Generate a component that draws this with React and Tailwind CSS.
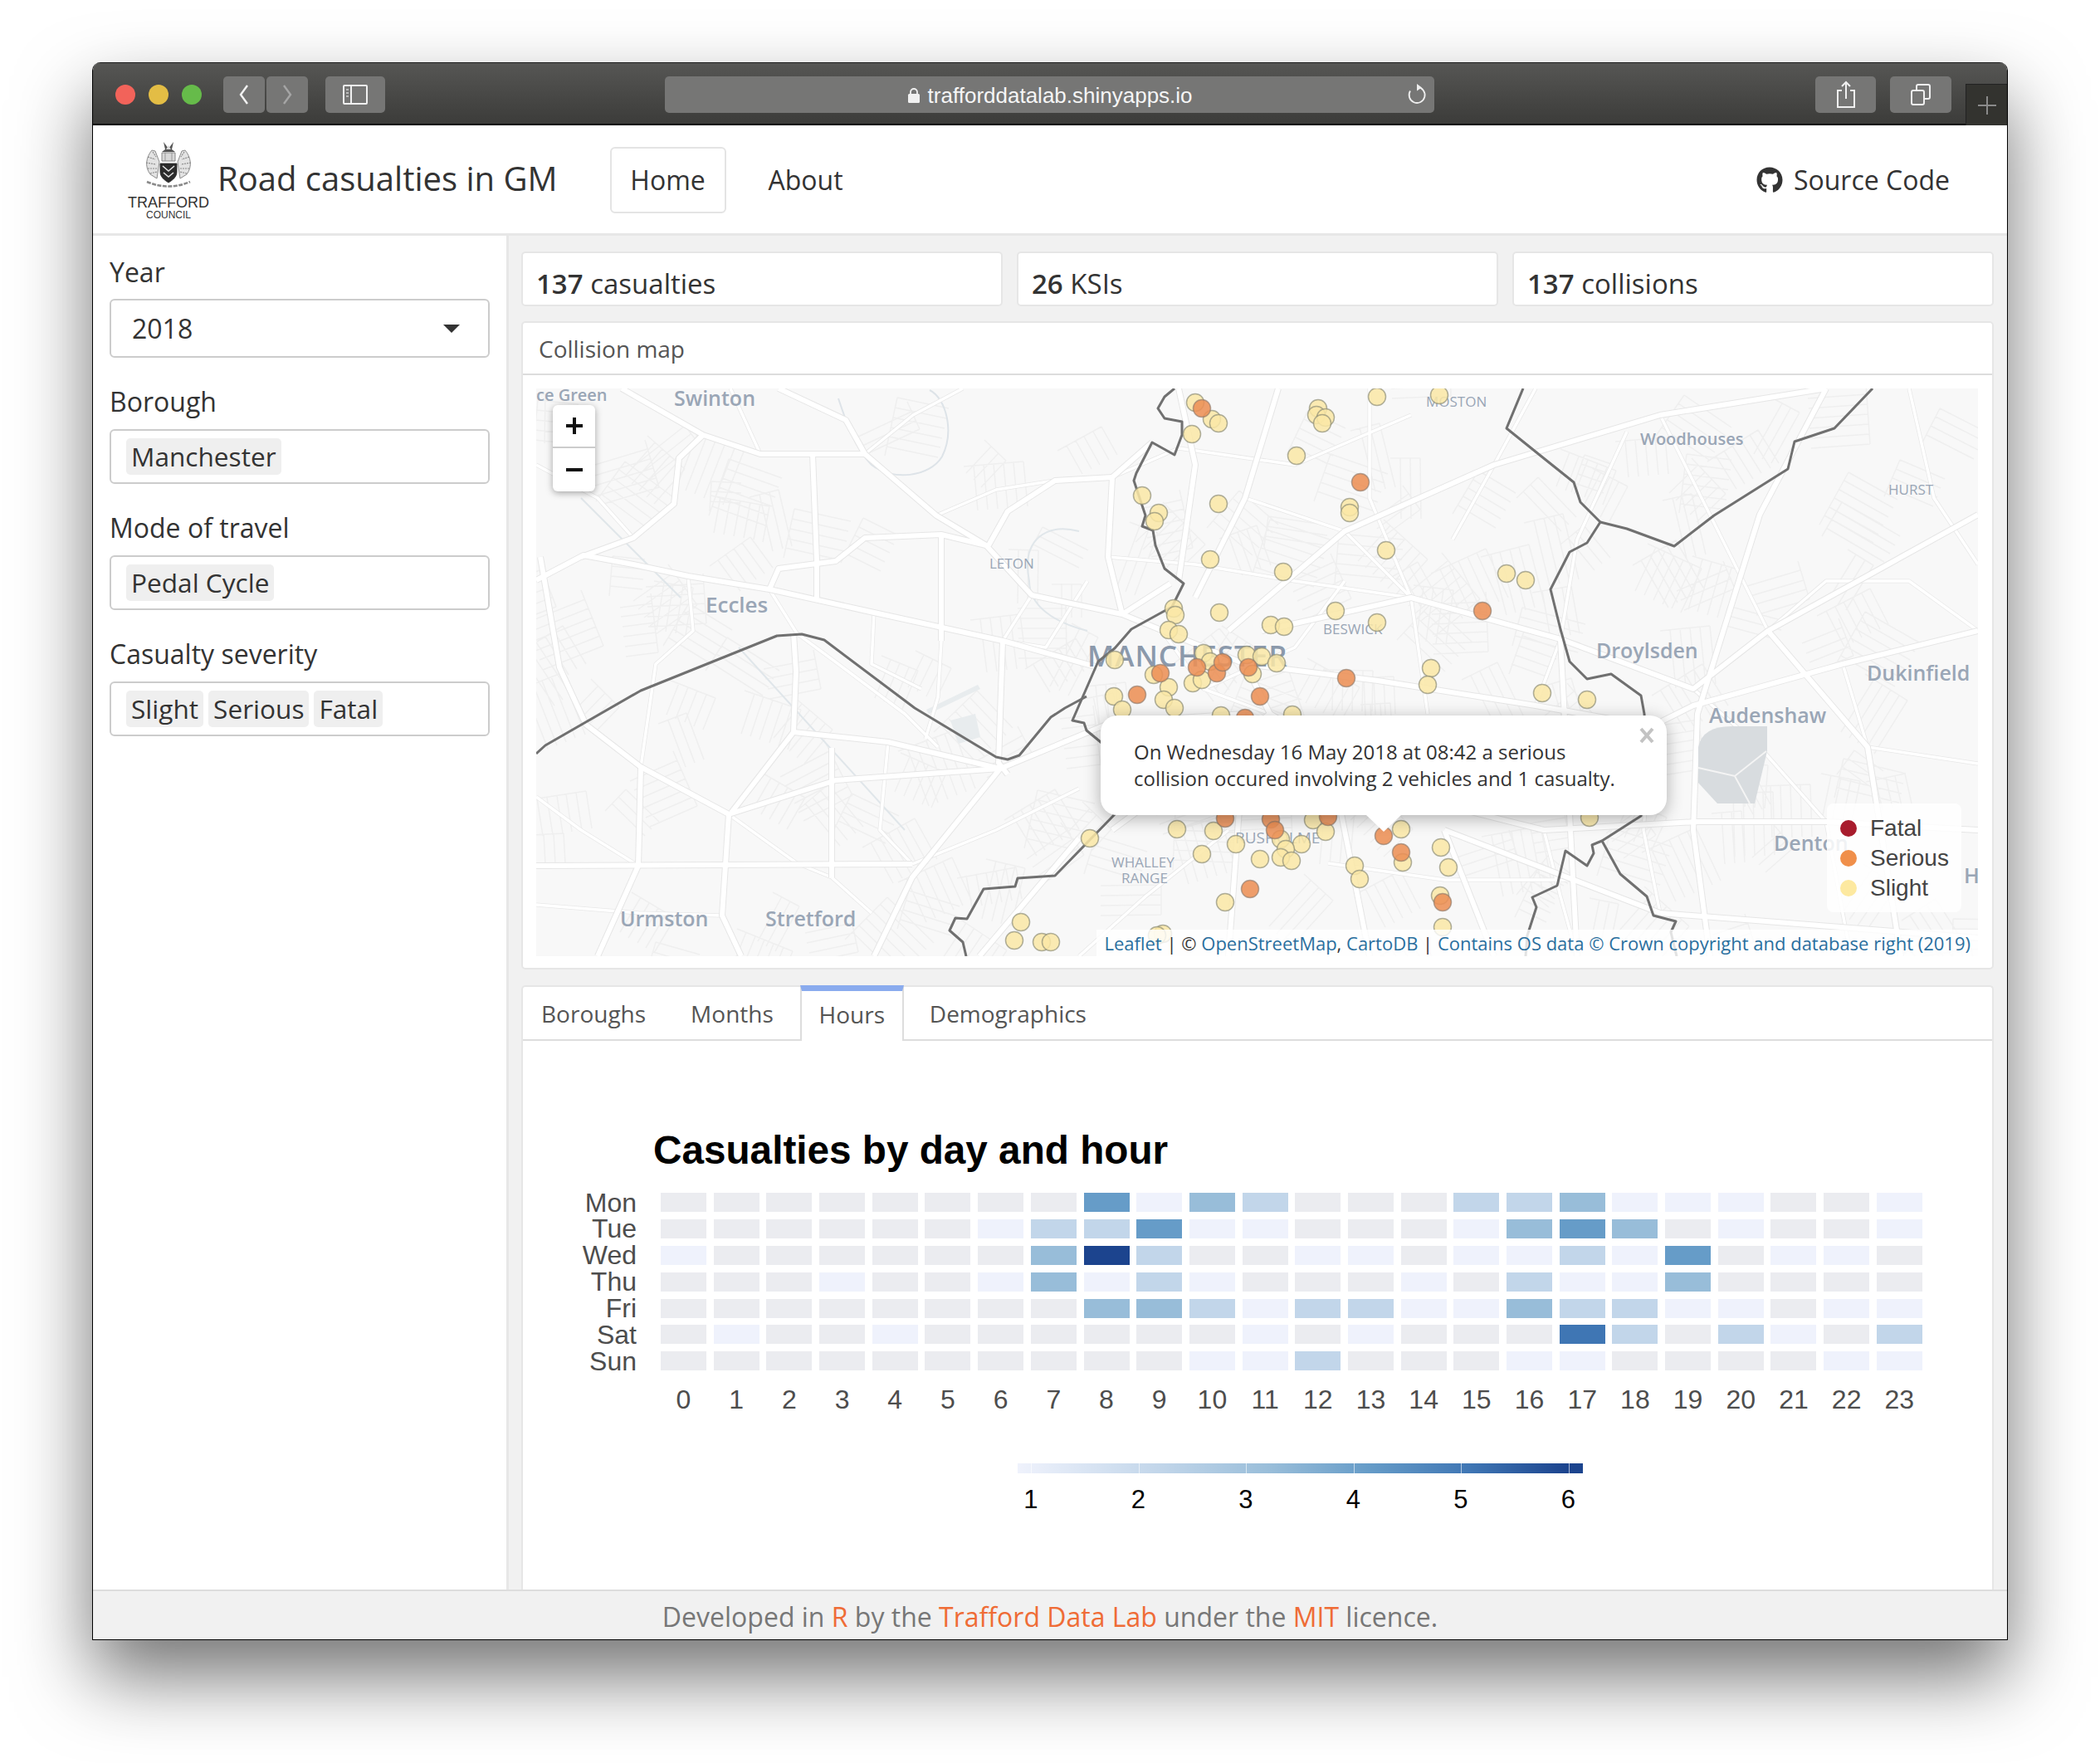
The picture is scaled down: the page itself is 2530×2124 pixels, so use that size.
import React from "react";
import { FaGithub } from "react-icons/fa";

const HEAT = [
  [0,0,0,0,0,0,0,0,4,1,3,2,0,0,0,2,2,3,1,1,1,0,0,1],
  [0,0,0,0,0,0,1,2,2,4,1,1,0,0,0,1,3,4,3,0,1,0,0,1],
  [1,0,0,0,0,0,0,3,6,2,0,0,1,1,0,1,1,2,1,4,0,1,1,0],
  [0,0,0,1,0,0,1,3,1,2,1,0,0,0,1,0,2,1,1,3,0,0,0,0],
  [0,0,0,0,0,0,0,0,3,3,2,1,2,2,1,1,3,2,2,1,1,0,1,1],
  [0,1,0,0,1,0,0,0,0,0,0,1,0,1,0,0,0,5,2,0,2,1,0,2],
  [0,0,0,0,0,0,0,0,0,0,1,1,2,0,0,0,1,1,0,0,0,0,1,1],
];
const HEAT_CLASS = ["bg-[#ebecf0]", "bg-[#eff2fc]", "bg-[#c2d6ea]", "bg-[#98bdd9]", "bg-[#669cc8]", "bg-[#3f76b4]", "bg-[#1c448e]"];
const DAYS = ["Mon", "Tue", "Wed", "Thu", "Fri", "Sat", "Sun"];

const SLIGHT = [
  [1440,485],[1460,505],[1468,510],[1436,523],[1376,597],[1396,618],[1391,628],[1468,607],[1458,674],[1414,733],[1416,741],[1408,759],[1420,764],[1469,738],
  [1531,753],[1547,755],[1588,492],[1586,500],[1597,503],[1593,510],[1659,478],[1734,476],[1562,549],[1626,611],[1626,618],[1670,663],[1546,689],[1815,691],[1838,699],[1609,736],[1659,750],
  [1343,795],[1390,813],[1408,828],[1437,823],[1448,819],[1450,787],[1458,797],[1502,789],[1520,791],[1538,799],[1509,812],[1342,839],[1352,855],[1402,843],[1415,853],[1471,862],[1557,861],
  [1724,805],[1720,825],[1858,835],[1912,843],[1418,999],[1462,1001],[1489,1017],[1582,988],[1597,1002],[1688,999],[1543,1011],[1568,1017],[1549,1023],[1543,1033],[1556,1037],[1518,1035],
  [1448,1029],[1313,1010],[1736,1021],[1745,1045],[1632,1043],[1638,1059],[1690,1039],[1735,1079],[1738,1117],[1476,1087],[1915,985],[1401,1125],[1394,1127],[1230,1111],[1222,1133],[1255,1135],[1266,1135],
];
const SERIOUS = [
  [1448,492],[1639,581],[1786,736],[1398,811],[1442,804],[1466,811],[1473,798],[1504,804],[1622,817],[1370,837],[1518,839],[1500,865],[1476,986],[1531,987],[1536,1000],[1600,984],[1667,1007],[1688,1027],[1738,1087],[1506,1071],
];

const ROADS = [
  [[646,699],[703,669],[763,680],[829,694],[927,710],[1053,738],[1208,772],[1323,804]],
  [[651,671],[674,804],[706,873],[772,924],[878,981],[870,1103],[893,1152]],
  [[749,468],[847,524],[916,547],[1042,547],[1128,621],[1188,657],[1243,717],[1352,740],[1410,703]],
  [[1042,547],[1019,506],[938,468]],
  [[847,524],[818,552],[812,607],[763,648],[700,671]],
  [[979,547],[984,676],[984,720]],
  [[927,710],[938,685],[1007,676],[1042,648],[1134,644],[1188,657]],
  [[1134,644],[1134,772]],
  [[1208,772],[1203,919],[1214,933]],
  [[956,882],[881,979]],
  [[956,882],[1070,894],[1205,926],[1340,870],[1500,860]],
  [[956,763],[959,809],[956,882]],
  [[1205,926],[1099,1057],[1053,1152]],
  [[878,981],[1007,940],[1205,926]],
  [[1002,901],[1002,1057]],
  [[646,1043],[1099,1041]],
  [[772,924],[769,1043],[720,1152]],
  [[1340,575],[1271,579],[1214,616],[1191,657]],
  [[1340,575],[1335,671],[1352,740]],
  [[1388,533],[1340,575]],
  [[1500,800],[1660,820],[1850,850],[1990,875],[2040,850],[2220,800],[2383,760]],
  [[1530,860],[1700,960],[1860,1000],[2045,990],[2200,990],[2383,1000]],
  [[1520,760],[1700,720],[1880,770],[2040,830],[2130,760],[2383,620]],
  [[1480,760],[1620,640],[1800,560],[2000,500],[2200,468]],
  [[1440,720],[1500,600],[1540,468]],
  [[1420,700],[1440,560],[1420,468]],
  [[2200,468],[2120,620],[2045,860],[2040,1000],[2060,1152]],
  [[1500,880],[1480,1152]],
  [[1600,900],[1650,1152]],
  [[1740,1000],[1800,1152]],
  [[1300,1010],[1180,1152]],
  [[1740,1000],[2000,1100],[2383,1130]],
  [[1352,740],[1500,800],[1530,860],[1340,1000]],
  [[1880,770],[1900,1152]],
  [[2130,760],[2250,900],[2290,1152]],
];

const MINOR_ROADS = [
  [[646,560],[720,600],[763,648]],
  [[1042,547],[1100,500],[1160,468]],
  [[916,547],[880,468]],
  [[1128,621],[1200,590],[1270,579]],
  [[829,694],[835,760],[790,800],[772,924]],
  [[927,710],[960,763],[1010,800],[1090,860],[1130,900]],
  [[1053,738],[1050,800],[1110,830]],
  [[1134,772],[1130,840],[1115,890]],
  [[646,960],[700,1000],[769,1043]],
  [[878,981],[960,1040],[1002,1057]],
  [[1002,1057],[1050,1100]],
  [[1070,894],[1060,1000],[1099,1041]],
  [[870,1103],[770,1100],[646,1090]],
  [[1099,1041],[1200,1000],[1300,950]],
  [[1208,772],[1260,780],[1310,700]],
  [[1243,717],[1208,772]],
  [[1340,575],[1420,540],[1560,560],[1700,500]],
  [[1335,671],[1440,680],[1560,700],[1700,720]],
  [[1500,600],[1620,640],[1700,720],[1720,860]],
  [[1850,850],[1880,770],[1900,650],[1960,520]],
  [[2040,830],[2120,900],[2200,990]],
  [[2220,800],[2250,900],[2383,920]],
  [[2130,760],[2200,700],[2300,700],[2383,760]],
  [[2000,500],[2060,620],[2130,760]],
  [[1990,875],[1980,1000],[2000,1100]],
  [[2200,990],[2220,1100],[2230,1152]],
  [[1860,1000],[1880,1080],[1900,1152]],
  [[1480,1000],[1380,1080],[1300,1152]],
  [[1600,1040],[1740,1060],[1900,1060]],
  [[1480,920],[1600,900],[1700,960]],
  [[1750,650],[1800,560],[1850,468]],
  [[1700,720],[1650,600],[1650,468]],
  [[1400,760],[1450,830],[1530,860]],
  [[1450,830],[1560,780],[1620,700]],
  [[2300,468],[2330,600],[2383,680]],
];

const WEST_LINE = [[646,908],[657,898],[772,832],[936,766],[966,764],[993,771],[1102,853],[1200,912],[1214,915],[1228,910],[1266,864],[1283,853],[1309,839]];
const CITY_LINE = [[1415,468],[1403,478],[1395,492],[1403,504],[1424,508],[1424,524],[1415,548],[1388,533],[1369,570],[1366,579],[1380,621],[1376,634],[1389,639],[1392,657],[1403,685],[1426,703],[1412,731],[1363,758],[1343,781],[1323,797],[1292,868],[1306,871],[1309,880],[1326,894],[1370,940],[1343,981],[1271,1055],[1226,1058],[1223,1068],[1185,1071],[1165,1107],[1151,1106],[1144,1121],[1160,1135],[1164,1152]];
const EAST_LINE = [[1835,468],[1815,516],[1856,549],[1896,581],[1904,605],[1928,629],[1912,654],[1891,665],[1868,710],[1880,758],[1891,797],[1912,818],[1941,812],[1977,838],[1981,860],[1985,920],[1977,983],[1930,1013],[1952,1053],[1984,1080],[1992,1103],[2019,1110],[2013,1123],[2020,1152]];
const NORTH_LINE = [[2256,468],[2210,516],[2162,532],[2154,565],[2065,621],[2017,658],[1960,637],[1928,629]];
const SOUTH_LINE = [[1930,1013],[1918,1018],[1920,1028],[1912,1043],[1886,1025],[1876,1067],[1846,1081],[1851,1093],[1840,1127],[1838,1152]];

const toPoints = (pts) => pts.map((p) => p.join(",")).join(" ");

// patches of parallel side streets for the base map, fixed seed
const makeStreets = () => {
  let seed = 11;
  const rnd = () => {
    seed = (seed * 16807) % 2147483647;
    return seed / 2147483647;
  };
  const out = [];
  for (let i = 0; i < 190; i++) {
    const cx = 646 + rnd() * 1737;
    const cy = 468 + rnd() * 684;
    const a = rnd() * 3.14;
    const dx = Math.cos(a);
    const dy = Math.sin(a);
    const rows = 3 + Math.floor(rnd() * 4);
    const len = 36 + rnd() * 46;
    for (let j = 0; j < rows; j++) {
      const ox = cx - dy * j * 12;
      const oy = cy + dx * j * 12;
      out.push(`M${ox.toFixed(0)} ${oy.toFixed(0)}l${(dx * len).toFixed(0)} ${(dy * len).toFixed(0)}`);
    }
    // cross street over the patch
    out.push(`M${cx.toFixed(0)} ${cy.toFixed(0)}l${(-dy * rows * 12).toFixed(0)} ${(dx * rows * 12).toFixed(0)}`);
  }
  return out.join("");
};
const STREETS = makeStreets();

const LABELS = [
  ["ce Green", 646, 483, 20, 600],
  ["Swinton", 812, 489, 25, 600],
  ["Eccles", 850, 738, 26, 600],
  ["LETON", 1192, 685, 17, 500],
  ["Urmston", 747, 1116, 25, 600],
  ["Stretford", 922, 1116, 25, 600],
  ["WHALLEY", 1339, 1045, 17, 500],
  ["RANGE", 1351, 1064, 17, 500],
  ["RUSHOLME", 1488, 1016, 19, 500],
  ["Woodhouses", 1976, 536, 20, 600],
  ["HURST", 2275, 596, 17, 500],
  ["MOSTON", 1718, 490, 17, 500],
  ["BESWICK", 1594, 764, 17, 500],
  ["Droylsden", 1923, 793, 25, 600],
  ["Dukinfield", 2249, 820, 25, 600],
  ["Audenshaw", 2059, 871, 25, 600],
  ["Denton", 2137, 1025, 25, 600],
  ["Hyde", 2366, 1064, 25, 600],
];

const MapDrawing = () => (
  <svg viewBox="646 468 1737 684" className="block w-[1737px] h-[684px] font-['Open_Sans',sans-serif]">
    <rect x="646" y="468" width="1737" height="684" fill="#f8f8f8" />
    <path d={STREETS} stroke="#efefef" strokeWidth="1.5" fill="none" />
    <path d="M1120 470c20 10 30 50 15 80-15 25-60 30-85 10-20-20-30-50-40-80" fill="none" stroke="#dde3e8" strokeWidth="2" />
    <path d="M700 600l120 120M1090 1000l-200-220M1300 640c-40-10-70 10-60 60 0 30 30 50 70 60" fill="none" stroke="#e0e6ea" strokeWidth="2" />
    <path d="M1116 855l62-30 3 5-62 30zM1145 868l30-8 6 28-26 8z" fill="#e8ecee" />
    {MINOR_ROADS.map((r, i) => (
      <polyline key={`mc${i}`} points={toPoints(r)} fill="none" stroke="#e8e8e8" strokeWidth="5" strokeLinejoin="round" />
    ))}
    {MINOR_ROADS.map((r, i) => (
      <polyline key={`m${i}`} points={toPoints(r)} fill="none" stroke="#ffffff" strokeWidth="3.5" strokeLinejoin="round" />
    ))}
    {ROADS.map((r, i) => (
      <polyline key={`c${i}`} points={toPoints(r)} fill="none" stroke="#e6e6e6" strokeWidth="8" strokeLinejoin="round" />
    ))}
    {ROADS.map((r, i) => (
      <polyline key={`r${i}`} points={toPoints(r)} fill="none" stroke="#ffffff" strokeWidth="6" strokeLinejoin="round" />
    ))}
    <path d="M2046 900q5-25 40-25h43v30l-15 63h-45l-23-25z" fill="#d8dcdf" />
    <path d="M2046 925l44 10 38-30M2090 935l18 33" fill="none" stroke="#f4f4f4" strokeWidth="2" />
    {LABELS.map(([t, x, y, size, weight]) => (
      <text key={t} x={x} y={y} fontSize={size} fontWeight={weight} fill="#9aa6b6">{t}</text>
    ))}
    <text x="1310" y="803" fontSize="35" fontWeight="600" fill="#8b99ab" letterSpacing="1">MANCHESTER</text>
    {[WEST_LINE, CITY_LINE, EAST_LINE, NORTH_LINE, SOUTH_LINE].map((l, i) => (
      <polyline key={`b${i}`} points={toPoints(l)} fill="none" stroke="#707070" strokeWidth="3" strokeLinejoin="round" />
    ))}
    {SLIGHT.map(([x, y], i) => (
      <circle key={`s${i}`} cx={x} cy={y} r="10.5" fill="#fae8a6" fillOpacity="0.85" stroke="#8f8f78" strokeOpacity="0.7" strokeWidth="1.5" />
    ))}
    {SERIOUS.map(([x, y], i) => (
      <circle key={`o${i}`} cx={x} cy={y} r="10.5" fill="#ec8f55" fillOpacity="0.88" stroke="#8f7a6a" strokeOpacity="0.65" strokeWidth="1.5" />
    ))}
  </svg>
);

const Crest = () => (
  <svg viewBox="0 0 60 60" className="w-[60px] h-[60px]">
    <path d="M24 2l6 8 6-8-2 9 4 3H22l4-3z" fill="#555" />
    <path d="M30 6l-3 5h6z" fill="#ddd" />
    <path d="M22 15h16v10H22z" fill="#d8d8d8" stroke="#888" strokeWidth="1" />
    <path d="M26 15v10M34 15v10" stroke="#999" strokeWidth="1" />
    <path d="M10 12c-7 8-9 20-2 29l8 5 3-20-5-13z" fill="#e3e3e3" stroke="#8c8c8c" strokeWidth="1" />
    <path d="M50 12c7 8 9 20 2 29l-8 5-3-20 5-13z" fill="#e3e3e3" stroke="#8c8c8c" strokeWidth="1" />
    <path d="M5 20l9 3M3 27l12 2M5 34l11 0M8 40l8-2M11 14l4 6M55 20l-9 3M57 27l-12 2M55 34l-11 0M52 40l-8-2M49 14l-4 6" stroke="#8a8a8a" strokeWidth="1.2" strokeDasharray="2 1" />
    <path d="M20 28h20v10c0 6-5 10-10 13-5-3-10-7-10-13z" fill="#2c2c2c" stroke="#222" strokeWidth="0.8" />
    <path d="M23 31l7 6 7-6M24 39l6 5 6-5" fill="none" stroke="#e0e0e0" strokeWidth="1.6" />
    <path d="M4 50q26 11 52 0" fill="none" stroke="#8a8a8a" strokeWidth="2.6" strokeDasharray="5 1.5" />
  </svg>
);

const Field = ({ label, chips, className }) => (
  <div className={className}>
    <div className="text-[32px] leading-[34px] text-[#333]">{label}</div>
    <div className="mt-[16px] h-[66px] border-2 border-[#cccccc] rounded-[6px] flex items-center gap-[6px] pl-[18px]">
      {chips.map((c) => (
        <span key={c} className="h-[44px] px-[6px] flex items-center bg-[#efefef] rounded-[5px] text-[31.6px] text-[#333]">{c}</span>
      ))}
    </div>
  </div>
);

const ChromeButton = ({ className, children }) => (
  <div className={`h-[44px] flex items-center justify-center rounded-[5px] bg-[#767675] ${className}`}>{children}</div>
);

const ValueBox = ({ value, label }) => (
  <div className="h-[66px] bg-white border-2 border-[#e6e6e6] rounded-[5px] pl-[16px] flex items-end pb-[3px] text-[33px] leading-[44px] text-[#333]">
    <span className="font-semibold">{value}</span>&nbsp;{label}
  </div>
);

const App = () => (
  <div className="w-[2530px] h-[2124px] bg-white pt-[75px] pl-[111px] overflow-hidden font-['Open_Sans',sans-serif]">
    <div className="w-[2308px] h-[1901px] flex flex-col overflow-hidden rounded-t-[10px] border-x border-b border-black bg-white shadow-[0_44px_90px_rgba(0,0,0,0.55)]">
      {/* Safari title bar */}
      <div className="h-[76px] shrink-0 flex items-start bg-gradient-to-b from-[#565654] to-[#3c3c3a] border-t border-b-2 border-t-[#1d1d1d] border-b-black">
        <div className="flex items-center gap-[16px] pl-[27px] pt-[26px]">
          <div className="w-[24px] h-[24px] rounded-full bg-[#f2635a]" />
          <div className="w-[24px] h-[24px] rounded-full bg-[#e3bd45]" />
          <div className="w-[24px] h-[24px] rounded-full bg-[#66bb4a]" />
        </div>
        <div className="flex gap-[2px] ml-[26px] mt-[16px]">
          <ChromeButton className="w-[50px]">
            <svg width="14" height="26" viewBox="0 0 14 26"><path d="M11 2L3 13l8 11" fill="none" stroke="#f2f2f2" strokeWidth="2.4" /></svg>
          </ChromeButton>
          <ChromeButton className="w-[50px]">
            <svg width="14" height="26" viewBox="0 0 14 26"><path d="M3 2l8 11L3 24" fill="none" stroke="#a5a5a5" strokeWidth="2.4" /></svg>
          </ChromeButton>
        </div>
        <ChromeButton className="w-[72px] ml-[21px] mt-[16px]">
          <svg width="30" height="24" viewBox="0 0 30 24"><rect x="1" y="1" width="28" height="22" rx="1" fill="none" stroke="#f0f0f0" strokeWidth="2" /><path d="M10 1v22" stroke="#f0f0f0" strokeWidth="2" /><path d="M4 6h3M4 10h3M4 14h3" stroke="#d0d0d0" strokeWidth="1.5" /></svg>
        </ChromeButton>
        <ChromeButton className="w-[929px] ml-[337px] mt-[16px] relative pt-[2px] font-['Liberation_Sans',sans-serif] text-[26px] text-[#f5f5f5]">
          <svg width="16" height="20" viewBox="0 0 16 20" className="mr-[9px]"><path d="M4 9V6a4 4 0 018 0v3" fill="none" stroke="#f0f0f0" strokeWidth="1.8" /><rect x="1" y="8" width="14" height="11" rx="1.5" fill="#f0f0f0" /></svg>
          trafforddatalab.shinyapps.io
          <svg width="26" height="26" viewBox="0 0 26 26" className="absolute right-[9px] top-[9px]"><path d="M15 4a9.5 9.5 0 11-9 4.5" fill="none" stroke="#eeeeee" strokeWidth="1.8" /><path d="M14 0l6 4.5-6 4z" fill="#eeeeee" /></svg>
        </ChromeButton>
        <ChromeButton className="w-[73px] ml-[459px] mt-[16px]">
          <svg width="24" height="34" viewBox="0 0 24 34"><path d="M7 12H2v20h20V12h-5M12 22V2M7 7l5-5 5 5" fill="none" stroke="#f0f0f0" strokeWidth="2" /></svg>
        </ChromeButton>
        <ChromeButton className="w-[74px] ml-[17px] mt-[16px]">
          <svg width="26" height="26" viewBox="0 0 26 26"><rect x="2" y="8" width="15" height="17" rx="2" fill="none" stroke="#f0f0f0" strokeWidth="2" /><path d="M8 8V3a2 2 0 012-2h12a2 2 0 012 2v13a2 2 0 01-2 2h-5" fill="none" stroke="#f0f0f0" strokeWidth="2" /></svg>
        </ChromeButton>
        <div className="w-[50px] h-[50px] ml-[17px] mt-[25px] bg-[#33332f] border-l border-t border-[#222] flex items-center justify-center">
          <svg width="24" height="24" viewBox="0 0 24 24"><path d="M12 1v22M1 12h22" stroke="#8a8a8a" strokeWidth="2" /></svg>
        </div>
      </div>

      {/* Navbar */}
      <div className="h-[133px] shrink-0 flex items-center bg-white border-b-[3px] border-[#e7e7e7]">
        <div className="w-[110px] ml-[36px] mt-[2px] flex flex-col items-center font-['Liberation_Sans',sans-serif]">
          <Crest />
          <div className="text-[18px] leading-[18px] mt-[6px] text-[#333]">TRAFFORD</div>
          <div className="text-[12px] leading-[12px] text-[#333]">COUNCIL</div>
        </div>
        <div className="ml-[4px] mb-[2px] text-[40px] leading-none text-[#333] whitespace-nowrap">Road casualties in GM</div>
        <div className="ml-[63px] h-[80px] w-[140px] mt-[2px] flex items-center justify-center border-2 border-[#e4e4e4] rounded-[6px] text-[32px] text-[#333]">Home</div>
        <div className="ml-[51px] mt-[2px] text-[32px] text-[#333]">About</div>
        <div className="ml-auto mr-[69px] mt-[2px] flex items-center gap-[13px] text-[32px] text-[#333]">
          <FaGithub size={32} />
          Source Code
        </div>
      </div>

      <div className="flex-1 min-h-0 flex">
        {/* Sidebar */}
        <div className="w-[501px] shrink-0 bg-white border-r-[3px] border-[#e7e7e7] pl-[20px] pr-[20px] pt-[27px]">
          <div className="text-[32px] leading-[34px] text-[#333]">Year</div>
          <div className="mt-[15px] h-[71px] border-2 border-[#cccccc] rounded-[6px] flex items-center justify-between pl-[25px] pr-[34px] text-[32px] text-[#333]">
            2018
            <svg width="20" height="10" viewBox="0 0 20 10"><path d="M0 0h20L10 10z" fill="#333" /></svg>
          </div>
          <Field label="Borough" chips={["Manchester"]} className="mt-[36px]" />
          <Field label="Mode of travel" chips={["Pedal Cycle"]} className="mt-[36px]" />
          <Field label="Casualty severity" chips={["Slight", "Serious", "Fatal"]} className="mt-[36px]" />
        </div>

        {/* Main panel */}
        <div className="flex-1 min-w-0 bg-[#f1f1f1] pl-[15px] pr-[16px] pt-[19px] flex flex-col gap-[18px]">
          <div className="grid grid-cols-3 gap-[17px]">
            <ValueBox value="137" label="casualties" />
            <ValueBox value="26" label="KSIs" />
            <ValueBox value="137" label="collisions" />
          </div>

          <div className="h-[781px] shrink-0 bg-white border-2 border-[#e6e6e6] rounded-[5px]">
            <div className="h-[63px] border-b-2 border-[#dddddd] pl-[19px] flex items-center text-[28px] text-[#555]">Collision map</div>
            <div className="relative w-[1737px] h-[684px] ml-[16px] mt-[16px] overflow-hidden">
              <MapDrawing />
              {/* zoom control */}
              <div className="absolute left-[20px] top-[20px] w-[51px] h-[104px] bg-white rounded-[6px] shadow-[0_2px_8px_rgba(0,0,0,0.35)] flex flex-col items-center">
                <div className="h-[52px] w-full border-b-2 border-[#cccccc] flex items-center justify-center">
                  <svg width="22" height="22" viewBox="0 0 22 22"><path d="M11 1v20M1 11h20" stroke="#111" strokeWidth="4" /></svg>
                </div>
                <div className="h-[52px] flex items-center justify-center">
                  <svg width="22" height="6" viewBox="0 0 22 6"><path d="M1 3h20" stroke="#111" strokeWidth="4" /></svg>
                </div>
              </div>
              {/* popup */}
              <div className="absolute left-[680px] top-[394px] w-[682px] h-[120px] bg-white rounded-[20px] shadow-[0_4px_20px_rgba(0,0,0,0.3)] pl-[40px] pt-[28px] text-[24px] leading-[32px] text-[#333] whitespace-nowrap">
                On Wednesday 16 May 2018 at 08:42 a serious<br />collision occured involving 2 vehicles and 1 casualty.
                <svg width="20" height="20" viewBox="0 0 20 20" className="absolute right-[14px] top-[14px]"><path d="M3 2l14 16M17 2L3 18" stroke="#c3c3c3" strokeWidth="4" /></svg>
              </div>
              <div className="absolute left-[1000px] top-[514px] w-0 h-0 border-x-[21px] border-x-transparent border-t-[20px] border-t-white" />
              {/* legend */}
              <div className="absolute left-[1555px] top-[500px] w-[162px] h-[131px] bg-white/85 rounded-[8px] flex flex-col justify-center gap-[8px] pl-[16px] font-['Liberation_Sans',sans-serif] text-[28px] leading-[28px] text-[#444]">
                <div className="flex items-center gap-[16px]"><span className="w-[20px] h-[20px] rounded-full bg-[#a81c2d]" />Fatal</div>
                <div className="flex items-center gap-[16px]"><span className="w-[20px] h-[20px] rounded-full bg-[#f08f4a]" />Serious</div>
                <div className="flex items-center gap-[16px]"><span className="w-[20px] h-[20px] rounded-full bg-[#fde9a0]" />Slight</div>
              </div>
              {/* attribution */}
              <div className="absolute right-0 bottom-0 h-[32px] pl-[10px] pr-[9px] bg-white/80 flex items-center text-[22px] text-[#333] whitespace-nowrap">
                <span className="text-[#2a6f9e]">Leaflet</span>&nbsp;|&nbsp;©&nbsp;<span className="text-[#2a6f9e]">OpenStreetMap</span>,&nbsp;<span className="text-[#2a6f9e]">CartoDB</span>&nbsp;|&nbsp;<span className="text-[#2a6f9e]">Contains OS data © Crown copyright and database right (2019)</span>
              </div>
            </div>
          </div>

          <div className="flex-1 min-h-0 mt-[1px] bg-white border-x-2 border-t-2 border-[#e6e6e6] rounded-t-[5px]">
            <div className="h-[65px] flex border-b-2 border-[#dddddd] text-[28px] text-[#555]">
              <div className="pl-[22px] pr-[27px] flex items-center">Boroughs</div>
              <div className="pl-[27px] pr-[32px] flex items-center">Months</div>
              <div className="w-[125px] h-[67px] -mt-[2px] pb-[5px] flex items-center justify-center bg-white border-x-2 border-[#dddddd] border-t-[7px] border-t-[#8aabee]">Hours</div>
              <div className="pl-[31px] flex items-center">Demographics</div>
            </div>
            <div className="pt-[104px] font-['Liberation_Sans',sans-serif]">
              <div className="ml-[157px] text-[47.7px] leading-[56px] font-bold text-black">Casualties by day and hour</div>
              <div className="flex mt-[23px]">
                <div className="w-[137px] shrink-0 flex flex-col gap-y-[8.9px] text-[32px] text-[#4d4d4d]">
                  {DAYS.map((d) => (
                    <div key={d} className="h-[23px] flex items-center justify-end">{d}</div>
                  ))}
                </div>
                <div className="ml-[29px]">
                  <div className="grid grid-cols-[repeat(24,55px)] auto-rows-[23px] gap-x-[8.7px] gap-y-[8.9px]">
                    {HEAT.flat().map((v, i) => (
                      <div key={i} className={HEAT_CLASS[v]} />
                    ))}
                  </div>
                  <div className="grid grid-cols-[repeat(24,55px)] gap-x-[8.7px] mt-[17px] text-[32px] leading-[36px] text-[#4d4d4d] text-center">
                    {HEAT[0].map((_, h) => (
                      <div key={h}>{h}</div>
                    ))}
                  </div>
                </div>
              </div>
              <div className="relative ml-[596px] mt-[59px] w-[681px] h-[12px] bg-[linear-gradient(90deg,#eff2fc_0%,#c2d6ea_25%,#98bdd9_45%,#669cc8_62%,#3f76b4_80%,#1c448e_97%)]">
                {[16, 145.5, 275, 404.5, 534, 663.5].map((left) => (
                  <div key={left} className="absolute top-0 w-px h-full bg-white/60" style={{ left }} />
                ))}
              </div>
              <div className="flex ml-[547px] mt-[14px] text-[31px] leading-[36px] text-black text-center">
                {[1, 2, 3, 4, 5, 6].map((n) => (
                  <div key={n} className="w-[129.5px]">{n}</div>
                ))}
              </div>
            </div>
          </div>
        </div>
      </div>

      {/* Footer */}
      <div className="h-[60px] shrink-0 bg-[#f1f1f1] border-t-2 border-[#dddddd] pt-[3px] flex items-center justify-center text-[32px] text-[#777]">
        Developed in&nbsp;<span className="text-[#ef6c36]">R</span>&nbsp;by the&nbsp;<span className="text-[#ef6c36]">Trafford Data Lab</span>&nbsp;under the&nbsp;<span className="text-[#ef6c36]">MIT</span>&nbsp;licence.
      </div>
    </div>
  </div>
);

export default App;
